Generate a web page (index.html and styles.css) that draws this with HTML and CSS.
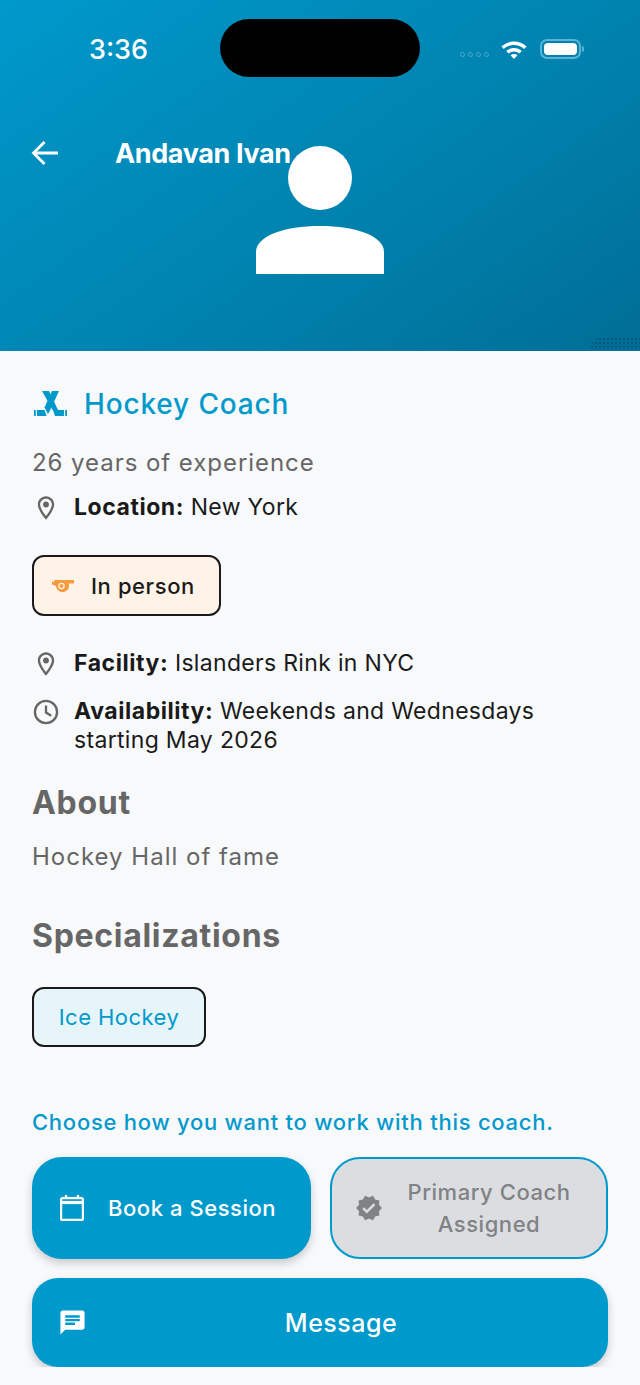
FILE: index.html
```html
<!DOCTYPE html>
<html lang="en">
<head>
    <meta charset="UTF-8">
    <meta name="viewport" content="width=device-width, initial-scale=1.0">
    <title>Coach Profile</title>
    <link rel="stylesheet" href="styles.css">
</head>
<body>

<header class="hero">
    <div class="island"></div>
    <div class="status-bar">
        <span class="clock">3:36</span>
        <div class="status-icons">
            <div class="signal"><i></i><i></i><i></i><i></i></div>
            <svg class="wifi" width="28" height="20" viewBox="0 0 28 20">
                <path d="M1.5 7.5C8.5.8 19.5.8 26.5 7.5L24.2 10C18.4 4.700 9.600 4.700 3.800 10Z" fill="#fff"/>
                <path d="M6.200 12C10.600 8 17.400 8 21.800 12L19.400 14.500C16.200 11.700 11.800 11.700 8.600 14.500Z" fill="#fff"/>
                <path d="M10.500 16.300C12.600 14.600 15.400 14.600 17.500 16.300L14 20Z" fill="#fff"/>
            </svg>
            <div class="battery"><span></span></div>
            <div class="battery-cap"></div>
        </div>
    </div>
    <div class="title-bar">
        <svg class="back" width="28" height="26" viewBox="0 0 28 26" fill="none" stroke="#fff" stroke-width="2.800">
            <path d="M27 13H3M13.500 2L2.500 13L13.500 24"/>
        </svg>
        <h1 class="coach-name">Andavan Ivan</h1>
    </div>
    <svg class="avatar" width="128" height="128" viewBox="0 0 128 128" fill="#fff">
        <circle cx="64" cy="32" r="32"/>
        <path d="M0 128V106C0 90 28 80 64 80S128 90 128 106V128Z"/>
    </svg>
    <div class="corner-dither"></div>
</header>

<main class="content">
    <div class="role">
        <svg width="34" height="28" viewBox="0 0 34 28" fill="#0099cc">
            <path d="M8 1H15L24 20V26H21L19.500 21.500Z"/>
            <path d="M25 1H18L10.500 17.500L14 24L16.500 19.500Z"/>
            <path d="M3 20H10.500L12.500 26H3Z"/>
            <path d="M0 20H1.800V26H0Z"/>
            <path d="M23 20H30V26H21.500Z"/>
            <path d="M31.200 20H33V26H31.200Z"/>
        </svg>
        <h2>Hockey Coach</h2>
    </div>
    <p class="muted experience">26 years of experience</p>
    <div class="info-row location-row">
        <svg class="info-icon" width="28" height="28" viewBox="0 0 24 24" fill="#666">
            <path d="M12 2C8.100 2 5 5.100 5 9c0 5.200 7 13 7 13s7-7.800 7-13c0-3.900-3.100-7-7-7zm0 2c2.800 0 5 2.200 5 5 0 2.900-2.900 7.200-5 9.900C9.900 16.200 7 11.900 7 9c0-2.800 2.200-5 5-5z"/>
            <circle cx="12" cy="9" r="2.500"/>
        </svg>
        <p><b>Location:</b> New York</p>
    </div>

    <div class="chip chip-person">
        <svg width="24" height="16" viewBox="0 0 24 16">
            <path d="M3 2H23V5.500H17.500C17.800 6.500 18 7.200 18 8C18 11.500 15 14 11.500 14C8 14 5.500 11.500 5 8L1 6.500V3.500L3.500 4Z" fill="#f79a3e"/>
            <circle cx="10.500" cy="8" r="2.600" fill="none" stroke="#fff3e8" stroke-width="1.300"/>
        </svg>
        <span>In person</span>
    </div>

    <div class="info-row facility-row">
        <svg class="info-icon" width="28" height="28" viewBox="0 0 24 24" fill="#666">
            <path d="M12 2C8.100 2 5 5.100 5 9c0 5.200 7 13 7 13s7-7.800 7-13c0-3.900-3.100-7-7-7zm0 2c2.800 0 5 2.200 5 5 0 2.900-2.900 7.200-5 9.900C9.900 16.200 7 11.900 7 9c0-2.800 2.200-5 5-5z"/>
            <circle cx="12" cy="9" r="2.500"/>
        </svg>
        <p><b>Facility:</b> Islanders Rink in NYC</p>
    </div>
    <div class="info-row availability-row">
        <svg class="info-icon" width="28" height="28" viewBox="0 0 24 24" fill="none" stroke="#666" stroke-width="2">
            <circle cx="12" cy="12" r="9.500"/>
            <path d="M12 6.500V12.500L16.500 15.200"/>
        </svg>
        <p><b>Availability:</b> Weekends and Wednesdays starting May 2026</p>
    </div>

    <h3 class="section-title about-title">About</h3>
    <p class="muted about-text">Hockey Hall of fame</p>

    <h3 class="section-title spec-title">Specializations</h3>
    <div class="chip chip-spec">Ice Hockey</div>

    <p class="choose">Choose how you want to work with this coach.</p>

    <div class="actions">
        <button class="btn btn-book">
            <svg width="32" height="32" viewBox="0 0 32 32" fill="none" stroke="#fff" stroke-width="2.200">
                <rect x="5.100" y="6.100" width="21.800" height="21.800" rx="1.500"/>
                <path d="M5 10.500H27" stroke-width="3.200"/>
                <path d="M10 3V6M22 3V6"/>
            </svg>
            <span>Book a Session</span>
        </button>
        <button class="btn btn-primary-coach">
            <svg width="28" height="28" viewBox="0 0 24 24" fill="#808285">
                <path d="M23 12l-2.440-2.790.34-3.690-3.610-.82-1.890-3.200L12 2.960 8.600 1.500 6.710 4.690 3.100 5.500l.34 3.700L1 12l2.440 2.790-.34 3.700 3.610.82L8.600 22.500l3.400-1.470 3.400 1.460 1.890-3.190 3.610-.82-.34-3.690L23 12zm-12.910 4.720l-3.800-3.810 1.480-1.480 2.320 2.330 5.850-5.870 1.480 1.480-7.330 7.350z"/>
            </svg>
            <span>Primary Coach Assigned</span>
        </button>
    </div>
    <button class="btn btn-message">
        <svg width="29" height="29" viewBox="0 0 24 24" fill="#fff">
            <path d="M20 2H4c-1.100 0-2 .9-2 2v18l4-4h14c1.100 0 2-.9 2-2V4c0-1.100-.9-2-2-2zM6 9h12v2H6V9zm8 5H6v-2h8v2zm4-6H6V6h12v2z"/>
        </svg>
        <span>Message</span>
    </button>
</main>

</body>
</html>
```

FILE: styles.css
```css
* {
    box-sizing: border-box;
}

body {
    margin: 0;
    background-color: #f8f9fb;
    font-family: Inter, "Liberation Sans", sans-serif;
    color: #1a1a1a;
}

h1, h2, h3, p {
    margin: 0;
    font-weight: inherit;
}

/* Header */
.hero {
    position: relative;
    height: 351px;
    background: linear-gradient(145deg, #0099cc 0%, #0085b2 50%, #006e96 100%);
}

.island {
    position: absolute;
    left: 220px;
    top: 19px;
    width: 200px;
    height: 58px;
    border-radius: 29px;
    background-color: #000;
}

.status-bar {
    display: flex;
    justify-content: space-between;
    align-items: center;
    height: 98px;
    padding: 0 56px 0 89px;
}

.clock {
    font-size: 27px;
    font-weight: 500;
    color: #fff;
}

.status-icons {
    display: flex;
    align-items: center;
}

.signal {
    display: flex;
    gap: 3px;
    margin-right: 11px;
    margin-top: 11px;
}

.signal i {
    width: 5px;
    height: 5px;
    border: 1.5px solid #4aa9cd;
    border-radius: 50%;
}

.wifi {
    margin-right: 12px;
}

.battery {
    width: 41px;
    height: 20px;
    padding: 2px;
    border: 2px solid #5bb3d6;
    border-radius: 7px;
}

.battery span {
    display: block;
    height: 100%;
    border-radius: 4px;
    background-color: #fff;
}

.battery-cap {
    width: 2px;
    height: 6px;
    margin-left: 1px;
    border-radius: 0 2px 2px 0;
    background-color: #5bb3d6;
}

.title-bar {
    display: flex;
    align-items: center;
    height: 40px;
    margin-top: 35px;
    padding-left: 31px;
}

.back {
    margin-right: 56px;
}

.coach-name {
    font-size: 27px;
    font-weight: 700;
    letter-spacing: -0.38px;
    color: #fff;
}

.avatar {
    position: absolute;
    left: 256px;
    top: 146px;
}

.corner-dither {
    position: absolute;
    right: 0;
    bottom: 1px;
    width: 54px;
    height: 13px;
    background-image: radial-gradient(#00587a 0.7px, transparent 0.9px);
    background-size: 4px 4px;
    clip-path: polygon(22% 0, 100% 0, 100% 100%, 0 100%);
}

/* Details */
.content {
    padding: 35px 32px 0;
}

.role {
    display: flex;
    align-items: center;
    gap: 16px;
    height: 36px;
    padding-left: 2px;
}

.role h2 {
    font-size: 28px;
    font-weight: 500;
    letter-spacing: 0.85px;
    color: #0099cc;
}

.muted {
    font-size: 24px;
    letter-spacing: 0.95px;
    color: #666;
}

.experience {
    margin-top: 26px;
    line-height: 30px;
}

.info-row {
    display: flex;
    align-items: flex-start;
    font-size: 23px;
    line-height: 29px;
    letter-spacing: 0.32px;
}

.info-row b {
    font-weight: 700;
    letter-spacing: 0.55px;
}

.info-icon {
    flex: none;
    margin-right: 14px;
    margin-top: 1px;
}

.location-row {
    margin-top: 15px;
}

.chip {
    display: flex;
    align-items: center;
    border: 2px solid #1a1a1a;
    border-radius: 12px;
    width: fit-content;
}

.chip-person {
    gap: 16px;
    height: 61px;
    margin-top: 33px;
    padding: 0 24px 0 17px;
    background-color: #fff3e8;
    font-size: 22px;
    font-weight: 500;
    letter-spacing: 0.6px;
}

.facility-row {
    margin-top: 33px;
}

.availability-row {
    margin-top: 19px;
}

.section-title {
    font-size: 32px;
    font-weight: 700;
    letter-spacing: 0.7px;
    color: #666;
}

.about-title {
    margin-top: 28px;
}

.about-text {
    margin-top: 20px;
    letter-spacing: 1px;
}

.spec-title {
    margin-top: 45px;
}

.chip-spec {
    justify-content: center;
    width: 174px;
    height: 60px;
    margin-top: 32px;
    background-color: #e6f5fa;
    font-size: 22px;
    letter-spacing: 0.45px;
    color: #0099cc;
}

.choose {
    margin-top: 61px;
    font-size: 22px;
    font-weight: 500;
    letter-spacing: 0.74px;
    line-height: 28px;
    color: #0099cc;
}

.actions {
    display: grid;
    grid-template-columns: 279px 278px;
    gap: 19px;
    margin-top: 21px;
}

.btn {
    display: flex;
    align-items: center;
    border: none;
    font-family: inherit;
    font-weight: 500;
    color: #fff;
    background-color: #0099cc;
    box-shadow: 0 4px 8px rgba(0, 0, 0, 0.2);
}

.btn-book {
    gap: 20px;
    height: 102px;
    padding: 0 24px;
    border-radius: 30px;
    font-size: 22px;
    letter-spacing: 0.55px;
    white-space: nowrap;
}

.btn-primary-coach {
    gap: 12px;
    height: 102px;
    padding: 0 23px;
    border: 2px solid #0099cc;
    border-radius: 30px;
    background-color: #dcdde0;
    box-shadow: none;
    font-size: 22px;
    line-height: 32px;
    letter-spacing: 0.55px;
    color: #808285;
}

.btn-primary-coach span {
    flex: 1;
    text-align: center;
}

.btn-message {
    gap: 3px;
    width: 576px;
    height: 89px;
    margin-top: 19px;
    padding: 0 16px 0 26px;
    border-radius: 26px;
    font-size: 25px;
    letter-spacing: 0.5px;
}

.btn-message span {
    flex: 1;
    text-align: center;
}
```
